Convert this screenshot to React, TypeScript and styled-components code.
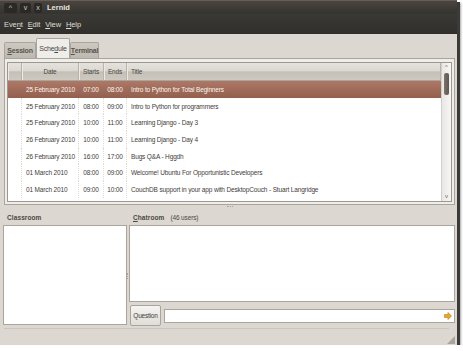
import React from "react";
import styled, { createGlobalStyle } from "styled-components";

const GlobalStyle = createGlobalStyle`
  html, body {
    margin: 0;
    padding: 0;
    background: #ffffff;
  }
  body {
    font-family: "Liberation Sans", Arial, sans-serif;
    color: #3c3b37;
  }
`;

interface Session {
  date: string;
  starts: string;
  ends: string;
  title: string;
}

const sessions: Session[] = [
  { date: "25 February 2010", starts: "07:00", ends: "08:00", title: "Intro to Python for Total Beginners" },
  { date: "25 February 2010", starts: "08:00", ends: "09:00", title: "Intro to Python for programmers" },
  { date: "25 February 2010", starts: "10:00", ends: "11:00", title: "Learning Django - Day 3" },
  { date: "26 February 2010", starts: "10:00", ends: "11:00", title: "Learning Django - Day 4" },
  { date: "26 February 2010", starts: "16:00", ends: "17:00", title: "Bugs Q&A - Hggdh" },
  { date: "01 March 2010", starts: "08:00", ends: "09:00", title: "Welcome! Ubuntu For Opportunistic Developers" },
  { date: "01 March 2010", starts: "09:00", ends: "10:00", title: "CouchDB support in your app with DesktopCouch - Stuart Langridge" },
];

const Window = styled.div`
  width: 457px;
  height: 345px;
  display: flex;
  flex-direction: column;
  background: #dcd8d1;
  box-shadow: 3px 2px 0 #3b3a38, 4px 3px 2px rgba(0, 0, 0, 0.35);
  overflow: hidden;
`;

const TitleBar = styled.div`
  height: 14px;
  display: flex;
  align-items: center;
  gap: 3px;
  padding: 0 4px;
  background: linear-gradient(#4a4540, #34332f);
  border-top: 1px solid #6a5a54;
  box-sizing: border-box;
`;

const WinButton = styled.span<{ $w: number }>`
  width: ${(p) => p.$w}px;
  height: 10px;
  display: flex;
  align-items: center;
  justify-content: center;
  border-radius: 2px;
  background: #2a2926;
  color: #cfccc6;
  font-size: 7px;
  line-height: 1;
`;

const WinTitle = styled.span`
  margin-left: 2px;
  font-size: 7.5px;
  font-weight: bold;
  color: #e8e6e1;
`;

const MenuBar = styled.div`
  height: 20px;
  display: flex;
  align-items: center;
  gap: 5px;
  padding: 0 4px;
  background: linear-gradient(#3a3935, #302f2b);
`;

const MenuItem = styled.span`
  font-size: 7.5px;
  color: #dfdbd2;
  letter-spacing: -0.1px;
`;

const Content = styled.div`
  flex: 1;
  display: flex;
  flex-direction: column;
  padding: 4px 2px 0 4px;
`;

const TabStrip = styled.div`
  height: 20px;
  display: flex;
  align-items: flex-end;
`;

const Tab = styled.div<{ $active?: boolean; $w: number }>`
  width: ${(p) => p.$w}px;
  height: ${(p) => (p.$active ? 20 : 16)}px;
  box-sizing: border-box;
  display: flex;
  align-items: center;
  justify-content: center;
  font-size: 7px;
  letter-spacing: -0.2px;
  font-weight: ${(p) => (p.$active ? "normal" : "bold")};
  color: ${(p) => (p.$active ? "#4a4843" : "#57534d")};
  background: ${(p) => (p.$active ? "#efedea" : "linear-gradient(#cdc8c0, #bdb8b0)")};
  border: 1px solid #a9a49c;
  border-bottom: none;
  border-radius: 2px 2px 0 0;
`;

const Panel = styled.div`
  height: 147px;
  width: 451px;
  box-sizing: border-box;
  padding: 3px 2px 2px 2px;
  background: #efedea;
  border: 1px solid #a9a49c;
`;

const Tree = styled.div`
  height: 100%;
  display: flex;
  border: 1px solid #9d988f;
  background: #ffffff;
  box-sizing: border-box;
`;

const TreeMain = styled.div`
  flex: 1;
  display: flex;
  flex-direction: column;
  overflow: hidden;
`;

const Grid = styled.div`
  display: grid;
  grid-template-columns: 14px 57px 25px 23px 1fr;
`;

const HeaderCell = styled.div<{ $center?: boolean }>`
  height: 17px;
  display: flex;
  align-items: center;
  justify-content: ${(p) => (p.$center ? "center" : "flex-start")};
  padding-left: ${(p) => (p.$center ? 0 : 4)}px;
  font-size: 6.5px;
  letter-spacing: -0.15px;
  color: #4a4843;
  background: linear-gradient(#e5e2dd 0%, #dcd8d1 45%, #c5c0b7 52%, #cdc8c0 100%);
  border-bottom: 1px solid #a9a49c;
  border-right: 1px solid #b9b4ab;
  box-shadow: inset 1px 0 0 #ece9e4;
`;

const Row = styled.div<{ $selected?: boolean }>`
  display: contents;
  & > div {
    background: ${(p) => (p.$selected ? "linear-gradient(#ad7866, #935f4e)" : "#ffffff")};
    color: ${(p) => (p.$selected ? "#fbf3ef" : "#3f3d39")};
    border-right-color: ${(p) => (p.$selected ? "transparent" : "#dedbd6")};
  }
`;

const Cell = styled.div<{ $center?: boolean; $sep?: boolean }>`
  height: 16.7px;
  display: flex;
  align-items: center;
  justify-content: ${(p) => (p.$center ? "center" : "flex-start")};
  padding-left: ${(p) => (p.$center ? 0 : 4)}px;
  font-size: 6.5px;
  letter-spacing: -0.15px;
  white-space: nowrap;
  overflow: hidden;
  border-right: ${(p) => (p.$sep ? "1px dotted" : "none")};
`;

const ScrollBar = styled.div`
  width: 9px;
  display: flex;
  flex-direction: column;
  align-items: center;
  background: linear-gradient(90deg, #e9e7e4, #f7f6f5);
  border-left: 1px solid #d2cec8;
`;

const Arrow = styled.span`
  height: 9px;
  font-size: 6px;
  line-height: 9px;
  color: #6e6a64;
`;

const Trough = styled.div`
  flex: 1;
  width: 100%;
  display: flex;
  justify-content: center;
`;

const Thumb = styled.div`
  margin-top: 1px;
  width: 5px;
  height: 22px;
  border-radius: 2px;
  background: linear-gradient(90deg, #7d736d, #5f5650);
`;

const Splitter = styled.div`
  height: 4px;
  display: flex;
  justify-content: center;
  align-items: center;
  &::after {
    content: "";
    width: 6px;
    height: 1px;
    border-top: 1px dotted #aaa59c;
  }
`;

const Lower = styled.div`
  display: grid;
  grid-template-columns: 124px 2px 1fr;
  margin-left: -1px;
`;

const PaneTitle = styled.div`
  height: 16px;
  display: flex;
  align-items: center;
  gap: 6px;
  padding: 0 4px;
  font-size: 6.5px;
  color: #4a4843;
`;

const PaneName = styled.span`
  font-weight: bold;
  letter-spacing: 0.1px;
`;

const PaneNote = styled.span`
  letter-spacing: -0.15px;
`;

const Pane = styled.div`
  display: flex;
  flex-direction: column;
`;

const WhiteBox = styled.div<{ $h: number }>`
  height: ${(p) => p.$h}px;
  background: #ffffff;
  border: 1px solid #a9a49c;
  box-sizing: border-box;
`;

const VHandle = styled.div`
  display: flex;
  align-items: center;
  justify-content: center;
  padding-top: 16px;
  &::after {
    content: "";
    width: 1px;
    height: 6px;
    border-left: 1px dotted #aaa59c;
  }
`;

const EntryRow = styled.div`
  margin-top: 3px;
  display: flex;
  align-items: center;
  gap: 3px;
  padding-left: 1px;
`;

const Button = styled.button`
  width: 31px;
  height: 21px;
  padding: 0;
  font-family: "Liberation Sans", Arial, sans-serif;
  font-size: 6.5px;
  letter-spacing: -0.2px;
  color: #3f3d39;
  background: linear-gradient(#f5f4f2, #e0ddd8);
  border: 1px solid #a9a49c;
  border-radius: 2px;
`;

const Entry = styled.div`
  flex: 1;
  height: 14px;
  box-sizing: border-box;
  display: flex;
  align-items: center;
  justify-content: flex-end;
  padding-right: 2px;
  background: #ffffff;
  border: 1px solid #a9a49c;
`;

const StatusBar = styled.div`
  margin-top: 2px;
  flex: 1;
  display: flex;
  justify-content: flex-end;
  align-items: flex-end;
  border-top: 1px solid #cbc7c0;
  margin-right: 6px;
  position: relative;
`;

const Grip = styled.svg`
  position: absolute;
  right: -6px;
  bottom: 1px;
`;

export default function App() {
  return (
    <>
      <GlobalStyle />
      <Window>
        <TitleBar>
          <WinButton $w={13}>^</WinButton>
          <WinButton $w={11}>v</WinButton>
          <WinButton $w={8}>x</WinButton>
          <WinTitle>Lernid</WinTitle>
        </TitleBar>
        <MenuBar>
          <MenuItem>Eve<u>n</u>t</MenuItem>
          <MenuItem><u>E</u>dit</MenuItem>
          <MenuItem><u>V</u>iew</MenuItem>
          <MenuItem><u>H</u>elp</MenuItem>
        </MenuBar>
        <Content>
          <TabStrip>
            <Tab $w={32}><u>S</u>ession</Tab>
            <Tab $w={34} $active>Sche<u>d</u>ule</Tab>
            <Tab $w={29}><u>T</u>erminal</Tab>
          </TabStrip>
          <Panel>
            <Tree>
              <TreeMain>
                <Grid>
                  <HeaderCell />
                  <HeaderCell $center>Date</HeaderCell>
                  <HeaderCell $center>Starts</HeaderCell>
                  <HeaderCell $center>Ends</HeaderCell>
                  <HeaderCell>Title</HeaderCell>
                  {sessions.map((s, i) => (
                    <Row key={i} $selected={i === 0}>
                      <Cell $sep />
                      <Cell $sep>{s.date}</Cell>
                      <Cell $center $sep>{s.starts}</Cell>
                      <Cell $center $sep>{s.ends}</Cell>
                      <Cell>{s.title}</Cell>
                    </Row>
                  ))}
                </Grid>
              </TreeMain>
              <ScrollBar>
                <Arrow>^</Arrow>
                <Trough>
                  <Thumb />
                </Trough>
                <Arrow>v</Arrow>
              </ScrollBar>
            </Tree>
          </Panel>
          <Splitter />
          <Lower>
            <Pane>
              <PaneTitle>
                <PaneName>Classroom</PaneName>
              </PaneTitle>
              <WhiteBox $h={100} />
            </Pane>
            <VHandle />
            <Pane>
              <PaneTitle>
                <PaneName><u>C</u>hatroom</PaneName>
                <PaneNote>(46 users)</PaneNote>
              </PaneTitle>
              <WhiteBox $h={77} />
              <EntryRow>
                <Button>Question</Button>
                <Entry>
                  <svg width="8" height="8" viewBox="0 0 8 8">
                    <path d="M0.5 2.5 H4 V0.5 L7.5 4 L4 7.5 V5.5 H0.5 Z" fill="#e8a92c" stroke="#b87a12" strokeWidth="0.6" />
                  </svg>
                </Entry>
              </EntryRow>
            </Pane>
          </Lower>
          <StatusBar>
            <Grip width="8" height="8" viewBox="0 0 8 8">
              <path d="M8 0 L8 8 L0 8 Z" fill="#a9a49c" />
            </Grip>
          </StatusBar>
        </Content>
      </Window>
    </>
  );
}
